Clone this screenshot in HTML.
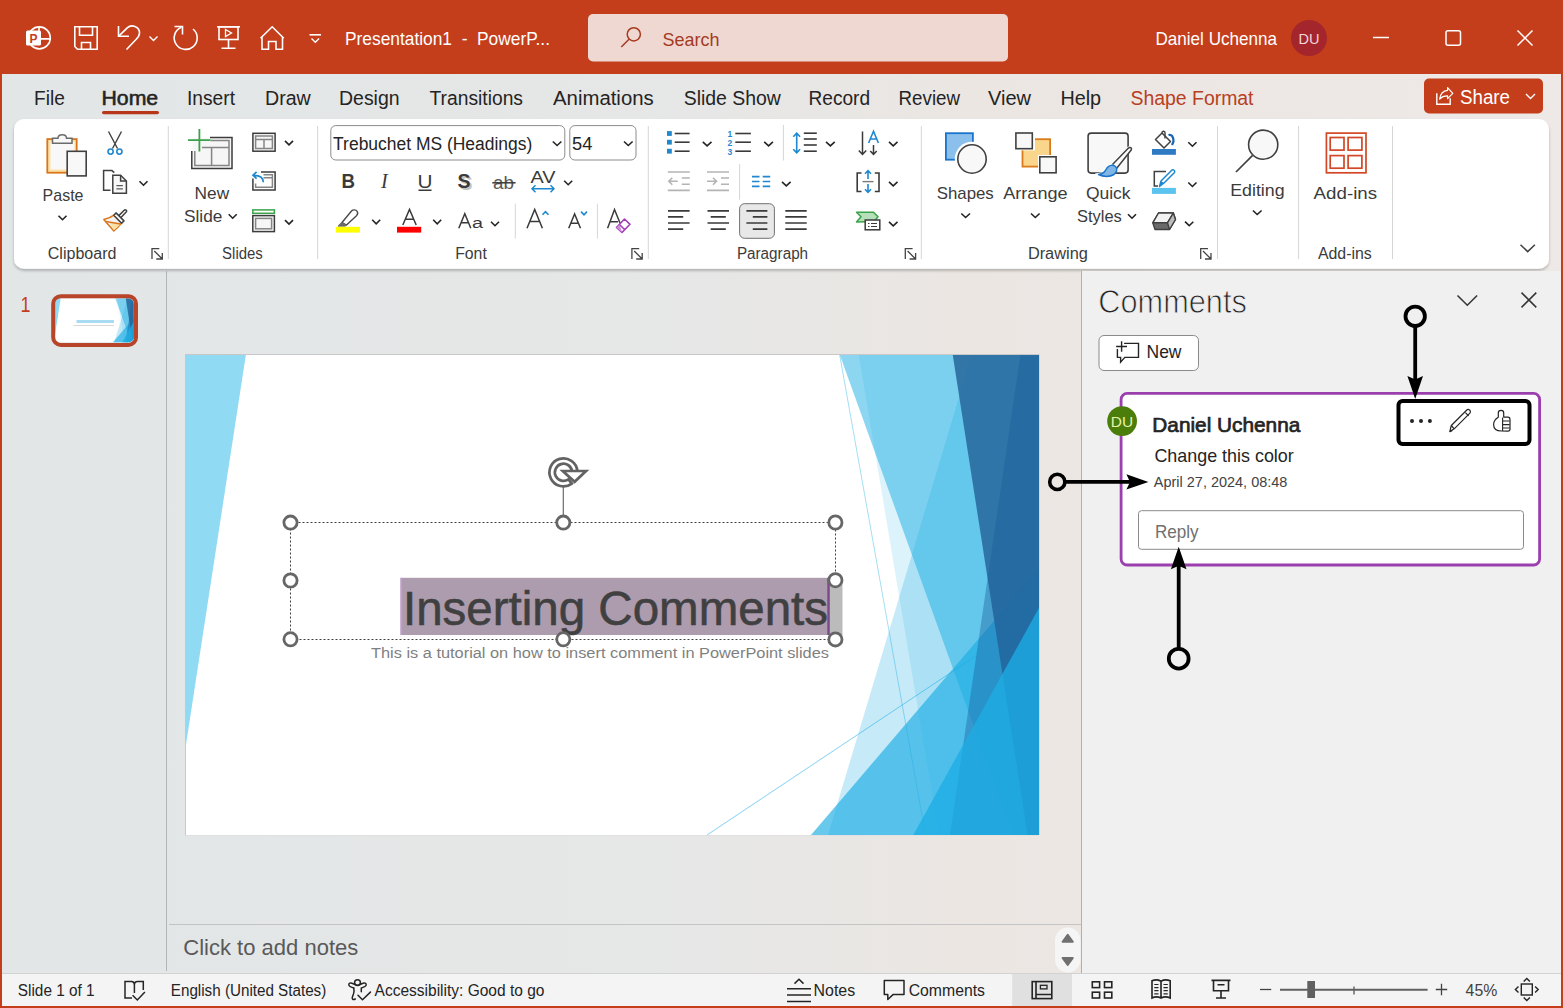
<!DOCTYPE html>
<html><head><meta charset="utf-8">
<style>
html,body{margin:0;padding:0;width:1563px;height:1008px;overflow:hidden;background:#e6e7e7;}
svg{display:block;position:absolute;left:0;top:0;}
text{font-family:"Liberation Sans",sans-serif;}
</style></head>
<body>
<svg width="1563" height="1008" viewBox="0 0 1563 1008">
<defs>
<linearGradient id="bg" x1="0" y1="0" x2="1" y2="0">
<stop offset="0" stop-color="#e2e6e7"/><stop offset="0.45" stop-color="#e6e7e6"/><stop offset="0.62" stop-color="#ebe6e2"/><stop offset="1" stop-color="#eee9e6"/>
</linearGradient>
<filter id="rsh" x="-5%" y="-20%" width="110%" height="150%"><feGaussianBlur in="SourceAlpha" stdDeviation="1.5"/><feOffset dy="1.5"/><feComponentTransfer><feFuncA type="linear" slope="0.25"/></feComponentTransfer><feMerge><feMergeNode/><feMergeNode in="SourceGraphic"/></feMerge></filter>
</defs>
<!-- window frame -->
<rect x="0" y="0" width="1563" height="1008" fill="#c43e1c"/>
<rect x="2" y="74" width="1559" height="932" fill="url(#bg)"/>
<!-- TITLE BAR -->
<g id="titlebar" fill="none" stroke="#ffffff" stroke-width="1.6">
<!-- ppt logo -->
<circle cx="39.3" cy="37.9" r="11"/>
<path d="M39 27 V38.9 H50.2"/>
<rect x="26" y="30.5" width="15" height="15" rx="1.5" fill="#ffffff" stroke="none"/>
<text x="29.6" y="42.8" font-size="13.5" font-weight="bold" fill="#c43e1c" stroke="none" textLength="8" lengthAdjust="spacingAndGlyphs">P</text>
<!-- save -->
<path d="M74.8 26.8 H97.2 V49.2 H77.5 L74.8 46.5 Z"/>
<path d="M79.5 26.8 V35.2 H92.5 V26.8"/>
<path d="M81.5 49.2 V42.5 H90.5 V49.2"/>
<!-- undo -->
<path d="M118.5 26 V36.2 H129"/>
<path d="M119 35.8 L127.5 27.6 C131.5 24 139.5 26.5 139.5 33 C139.5 36 138 37.5 136 39.5 L126.5 49.5"/>
<path d="M149.5 36.5 L153.5 40.5 L157.5 36.5" stroke-width="1.4"/>
<!-- redo (circle arrow) -->
<path d="M174.5 26.5 H182.5 V34.5"/>
<path d="M193 29 A11.5 11.5 0 1 1 181.5 27.2"/>
<!-- present -->
<path d="M217 26.8 H240"/>
<rect x="219" y="26.8" width="19" height="12.7"/>
<path d="M225.5 29.5 L231.5 33 L225.5 36.5 Z" stroke-width="1.3"/>
<path d="M228.5 39.5 V48 M221.5 48.3 H235.5"/>
<!-- home -->
<path d="M260.5 38.2 L272.2 26.8 L283.8 38.2 M262 36.8 V49.3 H268.5 V41.5 H276 V49.3 H282.5 V36.8"/>
<!-- customize -->
<path d="M309.5 34.8 H321" />
<path d="M311.5 38.5 L315.3 42.3 L319.1 38.5" stroke-width="1.4"/>
<!-- window controls -->
<path d="M1373 37.5 H1389" stroke-width="1.5"/>
<rect x="1446" y="30.8" width="14.5" height="14.5" rx="2" stroke-width="1.5"/>
<path d="M1517.5 30.5 L1532.5 45.5 M1532.5 30.5 L1517.5 45.5" stroke-width="1.5"/>
</g>
<text x="345" y="45" font-size="18.5" fill="#ffffff" style="white-space:pre" textLength="205" lengthAdjust="spacingAndGlyphs">Presentation1  -  PowerP...</text>
<rect x="588" y="14" width="420" height="47.5" rx="5" fill="#efd8d2"/>
<g fill="none" stroke="#a53a1f" stroke-width="1.5"><circle cx="633.8" cy="34.3" r="6.6"/><path d="M629 39.2 L621.3 47"/></g>
<text x="662.5" y="46" font-size="19" fill="#a53a1f" textLength="57" lengthAdjust="spacingAndGlyphs">Search</text>
<text x="1155.5" y="45" font-size="18.5" fill="#ffffff" textLength="121.5" lengthAdjust="spacingAndGlyphs">Daniel Uchenna</text>
<circle cx="1309" cy="38" r="18" fill="#a4262c"/>
<text x="1298.5" y="43.5" font-size="15" fill="#f0d8dc" textLength="21" lengthAdjust="spacingAndGlyphs">DU</text>

<!-- TABS -->
<g id="tabs" font-size="20">
<text x="34.0" y="105" fill="#242424" textLength="30.8" lengthAdjust="spacingAndGlyphs">File</text>
<text x="101.5" y="105" fill="#242424" stroke="#242424" stroke-width="0.55" textLength="56.7" lengthAdjust="spacingAndGlyphs">Home</text>
<text x="187.0" y="105" fill="#242424" textLength="48.0" lengthAdjust="spacingAndGlyphs">Insert</text>
<text x="265.0" y="105" fill="#242424" textLength="45.8" lengthAdjust="spacingAndGlyphs">Draw</text>
<text x="339.0" y="105" fill="#242424" textLength="60.6" lengthAdjust="spacingAndGlyphs">Design</text>
<text x="429.5" y="105" fill="#242424" textLength="93.5" lengthAdjust="spacingAndGlyphs">Transitions</text>
<text x="553.0" y="105" fill="#242424" textLength="100.7" lengthAdjust="spacingAndGlyphs">Animations</text>
<text x="683.7" y="105" fill="#242424" textLength="97.1" lengthAdjust="spacingAndGlyphs">Slide Show</text>
<text x="808.5" y="105" fill="#242424" textLength="61.5" lengthAdjust="spacingAndGlyphs">Record</text>
<text x="898.6" y="105" fill="#242424" textLength="61.4" lengthAdjust="spacingAndGlyphs">Review</text>
<text x="988.0" y="105" fill="#242424" textLength="43.0" lengthAdjust="spacingAndGlyphs">View</text>
<text x="1060.4" y="105" fill="#242424" textLength="40.7" lengthAdjust="spacingAndGlyphs">Help</text>
<text x="1130.5" y="105" fill="#b7401f" textLength="123.0" lengthAdjust="spacingAndGlyphs">Shape Format</text>
<rect x="102" y="111" width="57" height="3.2" rx="1.6" fill="#b8371a"/>
<rect x="1424" y="78.5" width="119" height="35" rx="5" fill="#c43e1c"/>
<g fill="none" stroke="#ffffff" stroke-width="1.4"><path d="M1436.8 93.2 V104.2 H1450.2 V98.3"/><path d="M1439.6 99 C1440.5 93.5 1444 90.6 1447.6 90.3 V87.6 L1452.8 93.3 L1447.6 98.6 V95.9 C1444.5 95.8 1441.8 96.8 1439.6 99 Z" stroke-linejoin="round" stroke-width="1.2"/>
<path d="M1526 94 L1530.5 98.5 L1535 94" stroke-width="1.4"/></g>
<text x="1460" y="104" font-size="20" fill="#ffffff" textLength="50" lengthAdjust="spacingAndGlyphs">Share</text>
</g>
<!-- RIBBON -->
<rect x="14" y="119" width="1535" height="149.8" rx="10" fill="#ffffff" filter="url(#rsh)"/>
<g id="ribbon">
<!--R1-->
<line x1="168.3" y1="126" x2="168.3" y2="259" stroke="#d6d6d6" stroke-width="1"/>
<line x1="317.6" y1="126" x2="317.6" y2="259" stroke="#d6d6d6" stroke-width="1"/>
<line x1="648.3" y1="126" x2="648.3" y2="259" stroke="#d6d6d6" stroke-width="1"/>
<line x1="921.3" y1="126" x2="921.3" y2="259" stroke="#d6d6d6" stroke-width="1"/>
<line x1="1217.5" y1="126" x2="1217.5" y2="259" stroke="#d6d6d6" stroke-width="1"/>
<line x1="1298.6" y1="126" x2="1298.6" y2="259" stroke="#d6d6d6" stroke-width="1"/>
<line x1="1392.5" y1="126" x2="1392.5" y2="259" stroke="#d6d6d6" stroke-width="1"/>
<text x="47.8" y="259.3" font-size="16" fill="#3b3b3b" textLength="68.6" lengthAdjust="spacingAndGlyphs">Clipboard</text>
<text x="222.1" y="259.3" font-size="16" fill="#3b3b3b" textLength="40.7" lengthAdjust="spacingAndGlyphs">Slides</text>
<text x="455.2" y="259.3" font-size="16" fill="#3b3b3b" textLength="31.6" lengthAdjust="spacingAndGlyphs">Font</text>
<text x="736.9" y="259.3" font-size="16" fill="#3b3b3b" textLength="71.2" lengthAdjust="spacingAndGlyphs">Paragraph</text>
<text x="1027.9" y="259.3" font-size="16" fill="#3b3b3b" textLength="59.9" lengthAdjust="spacingAndGlyphs">Drawing</text>
<text x="1317.9" y="259.3" font-size="16" fill="#3b3b3b" textLength="53.9" lengthAdjust="spacingAndGlyphs">Add-ins</text>
<g fill="none" stroke="#444" stroke-width="1.3"><path d="M152.0 259 V248.7 H159.3"/><path d="M154.3 251 L162.3 259 M162.3 253 V259 H156.3"/></g>
<g fill="none" stroke="#444" stroke-width="1.3"><path d="M631.9000000000001 259 V248.7 H639.2"/><path d="M634.2 251 L642.2 259 M642.2 253 V259 H636.2"/></g>
<g fill="none" stroke="#444" stroke-width="1.3"><path d="M905.3000000000001 259 V248.7 H912.6"/><path d="M907.6 251 L915.6 259 M915.6 253 V259 H909.6"/></g>
<g fill="none" stroke="#444" stroke-width="1.3"><path d="M1200.7 259 V248.7 H1208"/><path d="M1203 251 L1211 259 M1211 253 V259 H1205"/></g>
<g id="paste">
<rect x="47.3" y="139.1" width="29.4" height="33.6" fill="#fbe1a6" stroke="#d9761c" stroke-width="1.8"/>
<rect x="50.5" y="142" width="24" height="27.5" fill="#f8f8f8"/>
<path d="M52.5 143.3 V138.3 H58 C58 133.5 66.5 133.5 66.5 138.3 H72 V143.3 Z" fill="#f8f8f8" stroke="#6b6b6b" stroke-width="1.5"/>
<rect x="67.2" y="151.3" width="19" height="24.6" fill="#f8f8f8" stroke="#404040" stroke-width="1.6"/>
</g>
<text x="42.6" y="200.5" font-size="17" fill="#3b3b3b" textLength="40.9" lengthAdjust="spacingAndGlyphs">Paste</text>
<path d="M58.5 215.7 L62.5 219.7 L66.5 215.7" fill="none" stroke="#242424" stroke-width="1.6"/>
<g fill="none" stroke-width="1.4">
<path d="M108.5 131.5 L117.5 148.5 M121.5 131.5 L112.5 148.5" stroke="#404040"/>
<circle cx="110.6" cy="151.6" r="2.6" stroke="#1f88cf" stroke-width="1.6"/><circle cx="119.4" cy="151.6" r="2.6" stroke="#1f88cf" stroke-width="1.6"/>
</g>
<g fill="none" stroke="#404040" stroke-width="1.5">
<path d="M110.5 190.3 H103.6 V170.6 H111.9 L114.3 172.6"/>
<path d="M112.8 175.2 H120.6 L126.4 181 V193.3 H112.8 Z" fill="#f8f8f8"/>
<path d="M120.6 175.2 V181 H126.4"/>
<path d="M116.4 185.7 H122.9 M116.4 188.8 H122.9" stroke-width="1.3" stroke="#5a5a5a"/>
</g>
<path d="M139.5 181.2 L143.5 185.2 L147.5 181.2" fill="none" stroke="#242424" stroke-width="1.6"/>
<g stroke-width="1.5" stroke-linejoin="round">
<path d="M103.8 219.6 C107.5 218.8 111 217.5 113.8 215.2 L121.6 223.2 C119 226 116.5 228.5 113.8 231 Z" fill="#f3f3f3" stroke="#d9761c"/>
<path d="M109.8 223 L120.6 224.3 L113.8 230.2 Z" fill="#fbe1a6" stroke="none"/>
<path d="M105.8 221.6 L120.4 224" fill="none" stroke="#d9761c"/>
<path d="M118.8 215.6 L124.2 210.2 C125.2 209.2 127.4 210.6 126.4 211.8 L121 217.6" fill="#fff" stroke="#404040"/>
<path d="M113.8 215.2 L116 212.9 L124 220.9 L121.6 223.2 Z" fill="#fff" stroke="#404040"/>
</g>
<g fill="none" stroke="#858585" stroke-width="1.5">
<rect x="192.5" y="138" width="39" height="30" fill="#f6f6f6" stroke="none"/>
<path d="M210 137.4 H232 V168.4 H191.8 V151" stroke="#3c3c3c"/>
<path d="M194.8 151 V165.6 H229 V140.4 H210.5" />
<path d="M202 147.4 H229 M211.6 147.4 V165.6" />
</g>
<path d="M188 140.2 H210.5 M199.4 129 V151.6" stroke="#3aa24a" stroke-width="1.8"/>
<text x="194.6" y="198.6" font-size="17" fill="#3b3b3b" textLength="34.6" lengthAdjust="spacingAndGlyphs">New</text>
<text x="184.0" y="222.4" font-size="17" fill="#3b3b3b" textLength="38.4" lengthAdjust="spacingAndGlyphs">Slide</text>
<path d="M228.7 214.2 L232.7 218.2 L236.7 214.2" fill="none" stroke="#242424" stroke-width="1.6"/>
<g fill="none" stroke-width="1.5">
<rect x="252.9" y="133.3" width="22.2" height="17.9" fill="#f6f6f6" stroke="#3c3c3c"/>
<rect x="255.6" y="136" width="16.8" height="12.5" stroke="#858585"/>
<path d="M255.6 139.5 H272.4 M264 139.5 V148.5" stroke="#858585"/>
</g>
<path d="M285 140.9 L289 144.9 L293 140.9" fill="none" stroke="#242424" stroke-width="1.6"/>
<g fill="none" stroke-width="1.5">
<path d="M261 171.9 H275.1 V190 H252.9 V178.5" stroke="#3c3c3c"/>
<path d="M263.5 174.7 H272.4 V187.3 H255.6 V183.5 M263.5 177.8 H272.4" stroke="#858585"/>
</g>
<path d="M263.3 182.2 C263.3 177.8 261 175.3 253.5 175.3 M256.6 171.9 L253 175.3 L256.6 178.7" fill="none" stroke="#1f88cf" stroke-width="1.7"/>
<g fill="none" stroke-width="1.5">
<rect x="252.8" y="209.9" width="21.6" height="3.4" stroke="#3aa24a" fill="#ffffff"/>
<rect x="252.8" y="215.6" width="21.6" height="16" stroke="#3c3c3c" fill="#f6f6f6"/>
<rect x="255.6" y="218.4" width="16" height="10.4" stroke="#858585"/>
</g>
<path d="M285 220.1 L289 224.1 L293 220.1" fill="none" stroke="#242424" stroke-width="1.6"/>
<!--/R1-->
<!--R2-->
<rect x="330.8" y="125.6" width="234" height="34.4" rx="5" fill="#fff" stroke="#8c8c8c" stroke-width="1"/>
<rect x="569.8" y="125.6" width="66.2" height="34.4" rx="5" fill="#fff" stroke="#8c8c8c" stroke-width="1"/>
<text x="333.1" y="149.7" font-size="18" fill="#242424" textLength="199.2" lengthAdjust="spacingAndGlyphs">Trebuchet MS (Headings)</text>
<text x="572.0" y="149.7" font-size="18" fill="#242424" textLength="20.3" lengthAdjust="spacingAndGlyphs">54</text>
<path d="M552.8 141.5 L557.1 145.5 L561.4 141.5" fill="none" stroke="#242424" stroke-width="1.6"/>
<path d="M624.0 141.5 L628.3 145.5 L632.6 141.5" fill="none" stroke="#242424" stroke-width="1.6"/>
<text x="341.5" y="188" font-size="19.5" font-weight="bold" fill="#3a3a3a" textLength="13.5" lengthAdjust="spacingAndGlyphs">B</text>
<text x="381" y="188" font-size="20" font-style="italic" style="font-family:'Liberation Serif',serif" fill="#3a3a3a">I</text>
<text x="417.5" y="187.5" font-size="19" fill="#3a3a3a" textLength="15" lengthAdjust="spacingAndGlyphs">U</text>
<rect x="418.5" y="189.5" width="13" height="1.5" fill="#3a3a3a"/>
<text x="459.5" y="189.5" font-size="20" font-weight="bold" fill="#c4c4c4" textLength="13" lengthAdjust="spacingAndGlyphs">S</text>
<text x="457.5" y="187.8" font-size="20" font-weight="bold" fill="#3a3a3a" textLength="13" lengthAdjust="spacingAndGlyphs">S</text>
<text x="493" y="189" font-size="18" fill="#5a5a5a" textLength="21" lengthAdjust="spacingAndGlyphs">ab</text>
<path d="M492.3 182.8 H515.6" stroke="#3a3a3a" stroke-width="1.5"/>
<text x="530.5" y="183.2" font-size="17" fill="#3a3a3a" textLength="25" lengthAdjust="spacingAndGlyphs">AV</text>
<path d="M532 188.7 H554 M535.5 185.2 L532 188.7 L535.5 192.2 M550.5 185.2 L554 188.7 L550.5 192.2" fill="none" stroke="#1f88cf" stroke-width="1.5"/>
<path d="M564.2 180.7 L568.2 184.7 L572.2 180.7" fill="none" stroke="#242424" stroke-width="1.6"/>
<g stroke="#4a4a4a" stroke-width="1.4" stroke-linejoin="round">
<path d="M342 222.5 L351.5 211 C353 209.3 355.8 209.6 357 211.2 C358 212.6 357.7 214.5 356.5 215.7 L346.5 225 Z" fill="#fff"/>
<path d="M342 222.5 L338.5 226 L345 226 L346.5 225" fill="#6b6b6b" stroke="#6b6b6b"/>
</g>
<rect x="336" y="226.8" width="24" height="5.8" fill="#ffff00"/>
<path d="M372.2 219.8 L376.2 223.8 L380.2 219.8" fill="none" stroke="#242424" stroke-width="1.6"/>
<path d="M402.8 225 L409.5 209.5 L416.2 225 M405.3 219.3 H413.7" fill="none" stroke="#3a3a3a" stroke-width="1.5"/>
<rect x="397" y="226.8" width="24.2" height="5.8" fill="#ff0000"/>
<path d="M433.2 219.8 L437.2 223.8 L441.2 219.8" fill="none" stroke="#242424" stroke-width="1.6"/>
<path d="M458.8 228.2 L464.8 213.8 L470.8 228.2 M461 222.8 H468.6" fill="none" stroke="#3a3a3a" stroke-width="1.5"/>
<text x="472" y="228.3" font-size="15.5" fill="#3a3a3a" textLength="11" lengthAdjust="spacingAndGlyphs">a</text>
<path d="M491.0 221.7 L495.0 225.7 L499.0 221.7" fill="none" stroke="#242424" stroke-width="1.6"/>
<line x1="515.3" y1="203.7" x2="515.3" y2="238.6" stroke="#d6d6d6" stroke-width="1"/>
<line x1="597.4" y1="203.7" x2="597.4" y2="238.6" stroke="#d6d6d6" stroke-width="1"/>
<path d="M527 228.3 L534.7 209.5 L542.4 228.3 M529.7 221.6 H539.7" fill="none" stroke="#3a3a3a" stroke-width="1.5"/>
<path d="M542.5 214.8 L545.5 211.6 L548.5 214.8" fill="none" stroke="#1f88cf" stroke-width="1.6"/>
<path d="M568.7 228.3 L574.6 214 L580.5 228.3 M570.8 223.2 H578.4" fill="none" stroke="#3a3a3a" stroke-width="1.5"/>
<path d="M581 211.6 L584 214.8 L587 211.6" fill="none" stroke="#1f88cf" stroke-width="1.6"/>
<path d="M607.6 228.3 L614.5 209.5 L620 223 M610.2 221.8 H618" fill="none" stroke="#3a3a3a" stroke-width="1.5"/>
<path d="M616.5 227.5 L624.5 219 L630 224.3 L622 232.5 Z M619.5 224.5 L625 230" fill="#fff" stroke="#a23cb6" stroke-width="1.6" stroke-linejoin="round"/>
<path d="M616.5 227.5 L622 232.5 L619.5 224.5 Z" fill="#c98fd6" stroke="none"/>
<!--/R2-->
<!--R3-->
<rect x="667" y="131.1" width="4.8" height="4.8" fill="#1f88cf"/>
<path d="M674.7 133.5 H689.6" stroke="#3a3a3a" stroke-width="1.6"/>
<rect x="667" y="139.79999999999998" width="4.8" height="4.8" fill="#1f88cf"/>
<path d="M674.7 142.2 H689.6" stroke="#3a3a3a" stroke-width="1.6"/>
<rect x="667" y="148.79999999999998" width="4.8" height="4.8" fill="#1f88cf"/>
<path d="M674.7 151.2 H689.6" stroke="#3a3a3a" stroke-width="1.6"/>
<path d="M702.8 141.8 L707.1 145.8 L711.5 141.8" fill="none" stroke="#242424" stroke-width="1.6"/>
<text x="727.5" y="137.3" font-size="8.5" font-weight="bold" fill="#1f88cf">1</text>
<path d="M735.3 133.5 H750.9" stroke="#3a3a3a" stroke-width="1.6"/>
<text x="727.5" y="146.0" font-size="8.5" font-weight="bold" fill="#1f88cf">2</text>
<path d="M735.3 142.2 H750.9" stroke="#3a3a3a" stroke-width="1.6"/>
<text x="727.5" y="155.0" font-size="8.5" font-weight="bold" fill="#1f88cf">3</text>
<path d="M735.3 151.2 H750.9" stroke="#3a3a3a" stroke-width="1.6"/>
<path d="M764.2 141.8 L768.6 145.8 L772.9 141.8" fill="none" stroke="#242424" stroke-width="1.6"/>
<line x1="783.4" y1="125" x2="783.4" y2="160.5" stroke="#d6d6d6" stroke-width="1"/>
<path d="M796.7 133.5 V152.5 M793.3 136.8 L796.7 133.2 L800.1 136.8 M793.3 149.2 L796.7 152.8 L800.1 149.2" fill="none" stroke="#1f88cf" stroke-width="1.6"/>
<path d="M803.8 133.2 H816.8" stroke="#3a3a3a" stroke-width="1.6"/>
<path d="M803.8 139 H816.8" stroke="#3a3a3a" stroke-width="1.6"/>
<path d="M803.8 145 H816.8" stroke="#3a3a3a" stroke-width="1.6"/>
<path d="M803.8 151.2 H816.8" stroke="#3a3a3a" stroke-width="1.6"/>
<path d="M826.0 141.8 L830.4 145.8 L834.7 141.8" fill="none" stroke="#242424" stroke-width="1.6"/>
<path d="M862.5 131.5 V154.5 M858.8 150.5 L862.5 154.5 L866.2 150.5 M873.5 145 V154.5 M870.3 151 L873.5 154.5 L876.7 151" fill="none" stroke="#3a3a3a" stroke-width="1.5"/>
<path d="M868.6 143 L873.5 131.3 L878.4 143 M870.3 139 H876.7" fill="none" stroke="#1f88cf" stroke-width="1.6"/>
<path d="M889.0 141.8 L893.2 145.8 L897.5 141.8" fill="none" stroke="#242424" stroke-width="1.6"/>
<path d="M667.8 172 H689.8 M681.8 178 H689.8 M681.8 184.2 H689.8 M667.8 190.4 H689.8" stroke="#b4b4b4" stroke-width="1.6"/>
<path d="M677.8 181.2 H668.8 M672.3 177.7 L668.8 181.2 L672.3 184.7" fill="none" stroke="#b4b4b4" stroke-width="1.6"/>
<path d="M707 172 H729 M721 178 H729 M721 184.2 H729 M707 190.4 H729" stroke="#b4b4b4" stroke-width="1.6"/>
<path d="M707 181.2 H716.5 M713 177.7 L716.5 181.2 L713 184.7" fill="none" stroke="#b4b4b4" stroke-width="1.6"/>
<line x1="739.6" y1="164" x2="739.6" y2="199.7" stroke="#d6d6d6" stroke-width="1"/>
<path d="M752 176.6 H759.5 M752 181.5 H759.5 M752 186.4 H759.5 M762.7 176.6 H770.2 M762.7 181.5 H770.2 M762.7 186.4 H770.2" stroke="#1f88cf" stroke-width="1.7"/>
<path d="M782.0 181.8 L786.3 185.8 L790.6 181.8" fill="none" stroke="#242424" stroke-width="1.6"/>
<path d="M861.5 173 H857.2 V191.5 H861.5 M874.8 173 H879 V191.5 H874.8" fill="none" stroke="#3a3a3a" stroke-width="1.6"/>
<path d="M862.5 181.6 H873.5" stroke="#7a7a7a" stroke-width="1.4"/>
<path d="M868 171 V179 M865 173.8 L868 170.6 L871 173.8 M868 184 V192 M865 189.2 L868 192.4 L871 189.2" fill="none" stroke="#1f88cf" stroke-width="1.6"/>
<path d="M889.0 181.8 L893.2 185.8 L897.5 181.8" fill="none" stroke="#242424" stroke-width="1.6"/>
<rect x="739.6" y="203.7" width="34.8" height="34.6" rx="5" fill="#e8e8e8" stroke="#707070" stroke-width="1"/>
<path d="M668 210.9 H689.6 M668 216.9 H683.2 M668 223 H689.6 M668 229.1 H683.2" stroke="#3a3a3a" stroke-width="1.6"/>
<path d="M707.5 210.9 H729 M710.7 216.9 H725.8 M707.5 223 H729 M710.7 229.1 H725.8" stroke="#3a3a3a" stroke-width="1.6"/>
<path d="M746.4 210.9 H767.4 M752.8 216.9 H767.4 M746.4 223 H767.4 M752.8 229.1 H767.4" stroke="#3a3a3a" stroke-width="1.6"/>
<path d="M785.3 210.9 H806.7 M785.3 216.9 H806.7 M785.3 223 H806.7 M785.3 229.1 H806.7" stroke="#3a3a3a" stroke-width="1.6"/>
<path d="M856.5 222 L861 216.8 L856.5 212.2 H873.5 L878 216.8 L874 221.5 Z" fill="#b5e0b9" stroke="#3aa24a" stroke-width="1.5" stroke-linejoin="round"/>
<rect x="865.2" y="220" width="14.6" height="9.8" fill="#fff" stroke="#3a3a3a" stroke-width="1.5"/>
<path d="M868 223.5 H869.5 M871 223.5 H877 M868 226.5 H869.5 M871 226.5 H877" stroke="#3a3a3a" stroke-width="1.1"/>
<path d="M889.0 221.8 L893.2 225.8 L897.5 221.8" fill="none" stroke="#242424" stroke-width="1.6"/>
<!--/R3-->
<!--R4-->
<rect x="945.9" y="133.2" width="27" height="26.5" fill="#8cc0ec" stroke="#1b74c9" stroke-width="1.8"/>
<circle cx="972" cy="159" r="17.2" fill="#ffffff"/>
<circle cx="972" cy="159" r="14.2" fill="#f8f8f8" stroke="#404040" stroke-width="1.6"/>
<text x="936.7" y="199" font-size="17" fill="#3b3b3b" textLength="57.1" lengthAdjust="spacingAndGlyphs">Shapes</text>
<path d="M961.3 213.5 L965.6 217.5 L970.0 213.5" fill="none" stroke="#242424" stroke-width="1.6"/>
<rect x="1022.5" y="139.2" width="27.6" height="27.4" fill="#f9d68b" stroke="#db7a1b" stroke-width="1.8"/>
<rect x="1014.2" y="131.3" width="20.8" height="19.1" fill="#fff"/>
<rect x="1015.9" y="133" width="16.4" height="15.7" fill="#f8f8f8" stroke="#404040" stroke-width="1.6"/>
<rect x="1038" y="155" width="20.8" height="19.6" fill="#fff"/>
<rect x="1039.8" y="156.8" width="16.3" height="16" fill="#f8f8f8" stroke="#404040" stroke-width="1.6"/>
<text x="1003.2" y="199" font-size="17" fill="#3b3b3b" textLength="64.4" lengthAdjust="spacingAndGlyphs">Arrange</text>
<path d="M1031.0 213.5 L1035.3 217.5 L1039.6 213.5" fill="none" stroke="#242424" stroke-width="1.6"/>
<rect x="1088.1" y="133.1" width="40" height="40" rx="3" fill="#f8f8f8" stroke="#404040" stroke-width="1.6"/>
<path d="M1095 173.5 L1104 172 L1110 164.5 L1127 147.5 C1129.5 145 1133 146.8 1131 149.8 L1114.5 169 L1108 175.5 C1104 177.5 1099 177 1096 175.5 Z" fill="#fff" stroke="none"/>
<path d="M1112.5 164.5 L1128 148.5 C1130 146.5 1132.5 147.8 1131 150.3 L1116.5 168.5" fill="#fff" stroke="#404040" stroke-width="1.5" stroke-linejoin="round"/>
<path d="M1098.5 174.5 C1103.5 174 1105 171.5 1107 168 C1109 165 1113 164.5 1115.5 166.5 C1118 169 1116.5 172.5 1114 174.5 C1110 177 1103.5 177 1098.5 174.5 Z" fill="#7fb6e6" stroke="#1b74c9" stroke-width="1.5" stroke-linejoin="round"/>
<text x="1085.9" y="199" font-size="17" fill="#3b3b3b" textLength="44.7" lengthAdjust="spacingAndGlyphs">Quick</text>
<text x="1077.0" y="222.4" font-size="17" fill="#3b3b3b" textLength="44.8" lengthAdjust="spacingAndGlyphs">Styles</text>
<path d="M1128.0 214.2 L1132.0 218.2 L1136.0 214.2" fill="none" stroke="#242424" stroke-width="1.6"/>
<path d="M1155.5 139.5 L1162 133 L1170.5 141.5 L1164 148 Z" fill="#fff" stroke="#404040" stroke-width="1.5" stroke-linejoin="round"/>
<path d="M1162 133 C1162 131 1164.5 130.5 1165 132.5 V138.5" fill="none" stroke="#404040" stroke-width="1.4"/>
<path d="M1168.5 135 C1171.5 134 1173.5 136.5 1173.5 141.5 L1172 145" fill="none" stroke="#1565b5" stroke-width="2.2"/>
<rect x="1152" y="149" width="23.9" height="5.8" fill="#2e7bc4"/>
<path d="M1188.3 142.2 L1192.4 146.2 L1196.5 142.2" fill="none" stroke="#242424" stroke-width="1.6"/>
<path d="M1166 171.5 H1154.3 V186 H1158" fill="none" stroke="#404040" stroke-width="1.5"/>
<path d="M1159.5 186.5 L1161 181 L1171.5 170.5 C1173 169 1175.5 170.5 1174.5 172.5 L1164 183 Z" fill="#fff" stroke="#1f88cf" stroke-width="1.5" stroke-linejoin="round"/>
<path d="M1159.5 186.5 L1161 181 L1164 183 Z" fill="#1f88cf"/>
<rect x="1152" y="187.9" width="23.9" height="6" fill="#5bc4ee"/>
<path d="M1188.3 182.5 L1192.4 186.5 L1196.5 182.5" fill="none" stroke="#242424" stroke-width="1.6"/>
<path d="M1152.8 222.8 L1158.5 213 H1173.3 L1175.5 219.5 L1169.5 229.5 H1155 Z" fill="#6a6a6a" stroke="#404040" stroke-width="1.4" stroke-linejoin="round"/>
<path d="M1152.8 222.8 L1158.5 213 H1173.3 L1167.5 222.8 Z" fill="#f2f2f2" stroke="#404040" stroke-width="1.4" stroke-linejoin="round"/>
<path d="M1167.5 222.8 L1173.3 213 L1175.5 219.5 L1169.5 229.5 Z" fill="#bdbdbd" stroke="#404040" stroke-width="1.4" stroke-linejoin="round"/>
<path d="M1185.0 221.7 L1189.2 225.7 L1193.3 221.7" fill="none" stroke="#242424" stroke-width="1.6"/>
<circle cx="1263.2" cy="144.7" r="14.6" fill="#f8f8f8" stroke="#404040" stroke-width="1.6"/>
<path d="M1252.6 155.3 L1236 172" stroke="#404040" stroke-width="1.7"/>
<text x="1230.2" y="196" font-size="17" fill="#3b3b3b" textLength="54.4" lengthAdjust="spacingAndGlyphs">Editing</text>
<path d="M1252.9 210.5 L1257.2 214.5 L1261.6 210.5" fill="none" stroke="#242424" stroke-width="1.6"/>
<g fill="none" stroke="#d24726" stroke-width="1.7"><rect x="1326.4" y="133.1" width="39.6" height="39.7"/>
<rect x="1330.2" y="137.5" width="13.8" height="12.6"/>
<rect x="1348.1" y="137.5" width="13.8" height="12.6"/>
<rect x="1330.2" y="155.6" width="13.8" height="12.6"/>
<rect x="1348.1" y="155.6" width="13.8" height="12.6"/>
</g>
<text x="1313.6" y="199" font-size="17" fill="#3b3b3b" textLength="63.5" lengthAdjust="spacingAndGlyphs">Add-ins</text>
<path d="M1520.5 244.8 L1527.7 251.6 L1534.9 244.8" fill="none" stroke="#404040" stroke-width="1.5"/>
<!--/R4-->
</g>
<!-- thumbnails pane -->
<!-- thumbnail -->
<text x="20.5" y="312" font-size="21.5" fill="#c43e1c" textLength="10" lengthAdjust="spacingAndGlyphs">1</text>
<clipPath id="thclip"><rect x="55" y="298.3" width="78.8" height="44.2" rx="6"/></clipPath>
<g clip-path="url(#thclip)">
<g transform="translate(55.1,298.4) scale(0.0921,0.0917) translate(-185.5,-354.5)"><use href="#sc"/></g>
<rect x="76.5" y="320" width="37.5" height="3" fill="#a9dcf2"/>
<rect x="73.5" y="325" width="40.5" height="0.8" fill="#cfcfcf"/>
</g>
<rect x="53.2" y="296.2" width="82.8" height="48.7" rx="7.5" fill="none" stroke="#b8442a" stroke-width="4"/>

<line x1="166.5" y1="271" x2="166.5" y2="971" stroke="#b4b4b4" stroke-width="1"/>
<!-- slide -->
<g id="slide">
<rect x="185.5" y="354.5" width="853.5" height="480.2" fill="#ffffff" stroke="#c8c8c8" stroke-width="1"/>
<clipPath id="slideclip"><rect x="186" y="355" width="853" height="480"/></clipPath>
<g clip-path="url(#slideclip)"><g id="sc"><rect x="185" y="354" width="855" height="481" fill="#fff"/>
<polygon points="185,354 246,354 185,751" fill="#91daf3"/>
<polygon points="839.5,354 1040,354 1040,835 1013,835" fill="#1cade4" fill-opacity="0.5"/>
<polygon points="858.6,354 1040,354 1040,835 939,835" fill="#1cade4" fill-opacity="0.15"/>
<polygon points="972,354 1040,354 1040,835 828,835" fill="#1cade4" fill-opacity="0.25"/>
<polygon points="811,835 1040,567 1040,835" fill="#1cade4" fill-opacity="0.66"/>
<path d="M707 835 L976.5 655.5" stroke="#1cade4" stroke-opacity="0.55" stroke-width="1" fill="none"/>
<polygon points="952.6,354 1040,354 1040,835 1027.6,835" fill="#2a6ca0" fill-opacity="0.9"/>
<polygon points="1020.5,354 1040,354 1040,835 950,835" fill="#1a5e9e" fill-opacity="0.4"/>
<polygon points="913.3,835 1040,606 1040,835" fill="#1cade4" fill-opacity="0.78"/>
<path d="M839.5 354 L925.5 835" stroke="#1cade4" stroke-opacity="0.4" stroke-width="1" fill="none"/>
</g></g>
<rect x="290.5" y="522.5" width="545" height="117" fill="none" stroke="#404040" stroke-width="1" stroke-dasharray="2 2"/>
<rect x="400.5" y="577.8" width="429" height="57.2" fill="#ad9bae"/>
<rect x="400.5" y="577.8" width="1.6" height="57.2" fill="#c39bd3"/>
<rect x="829.8" y="577.8" width="12.7" height="57.2" fill="#bbbbbb"/>
<rect x="827.3" y="577.8" width="2.5" height="57.2" fill="#7b4a8b"/>
<text x="403" y="624.8" font-size="47.5" fill="#404040" stroke="#404040" stroke-width="0.6" textLength="425" lengthAdjust="spacingAndGlyphs">Inserting Comments</text>
<text x="371" y="657.5" font-size="15.5" fill="#7f7f7f" textLength="458" lengthAdjust="spacingAndGlyphs">This is a tutorial on how to insert comment in PowerPoint slides</text>
<line x1="563.3" y1="487" x2="563.3" y2="515" stroke="#6a6a6a" stroke-width="1.2"/>
<g fill="none" stroke="#626262" stroke-width="2.7" stroke-linejoin="miter"><path d="M577.4 471 A14 14 0 1 0 571.8 483.6 L568.4 479.4 A8.6 8.6 0 1 1 572 471"/><path d="M562.8 471 H586 L574.6 481.8 Z"/></g>
<circle cx="290.5" cy="522.6" r="6.6" fill="#fff" stroke="#666" stroke-width="2.8"/>
<circle cx="563.3" cy="522.6" r="6.6" fill="#fff" stroke="#666" stroke-width="2.8"/>
<circle cx="835.4" cy="522.5" r="6.6" fill="#fff" stroke="#666" stroke-width="2.8"/>
<circle cx="290.5" cy="580.5" r="6.6" fill="#fff" stroke="#666" stroke-width="2.8"/>
<circle cx="835.4" cy="580.2" r="6.6" fill="#fff" stroke="#666" stroke-width="2.8"/>
<circle cx="290.5" cy="639.3" r="6.6" fill="#fff" stroke="#666" stroke-width="2.8"/>
<circle cx="563.3" cy="639.3" r="6.6" fill="#fff" stroke="#666" stroke-width="2.8"/>
<circle cx="835.4" cy="639.4" r="6.6" fill="#fff" stroke="#666" stroke-width="2.8"/>
</g>
<!-- notes -->
<line x1="169" y1="924.5" x2="1081" y2="924.5" stroke="#c4c4c4" stroke-width="1"/>
<!-- comments pane -->
<rect x="1082" y="271" width="479" height="702" fill="#f0f0f0"/>
<line x1="1081.5" y1="271" x2="1081.5" y2="973" stroke="#b0b0b0" stroke-width="1"/>
<g id="comments">
<text x="1098.3" y="313.3" font-size="32.5" fill="#242424" stroke="#f0f0f0" stroke-width="0.9" textLength="148.5" lengthAdjust="spacingAndGlyphs">Comments</text>
<path d="M1457.5 295.5 L1467.3 305.3 L1477.1 295.5" fill="none" stroke="#333" stroke-width="1.5"/>
<path d="M1521.5 292.6 L1536.3 307.4 M1536.3 292.6 L1521.5 307.4" fill="none" stroke="#333" stroke-width="1.5"/>
<rect x="1099" y="335.5" width="99.5" height="35" rx="5" fill="#ffffff" stroke="#8a8a8a" stroke-width="1"/>
<g fill="none" stroke="#242424" stroke-width="1.4">
<path d="M1124.1 343.4 H1138.5 V357.4 H1124.8 L1120.6 362.2 V357.4 H1117.4 V349"/>
<path d="M1116.1 346.5 H1127 M1121.6 341.3 V351.8"/>
</g>
<text x="1146.5" y="358.2" font-size="18.5" fill="#242424" textLength="35" lengthAdjust="spacingAndGlyphs">New</text>
<!-- card -->
<rect x="1121.1" y="393.4" width="418.5" height="171.6" rx="6" fill="#ffffff" stroke="#9b3fae" stroke-width="2.8"/>
<circle cx="1122.1" cy="421.1" r="14.9" fill="#4a7d0a"/>
<text x="1110.8" y="426.8" font-size="15" fill="#e8f2a8" textLength="22.3" lengthAdjust="spacingAndGlyphs">DU</text>
<text x="1152.3" y="431.6" font-size="21" fill="#242424" stroke="#242424" stroke-width="0.7" textLength="148" lengthAdjust="spacingAndGlyphs">Daniel Uchenna</text>
<text x="1154.4" y="462.2" font-size="18.5" fill="#242424" textLength="139.4" lengthAdjust="spacingAndGlyphs">Change this color</text>
<text x="1153.8" y="487.1" font-size="15.5" fill="#424242" textLength="133.6" lengthAdjust="spacingAndGlyphs">April 27, 2024, 08:48</text>
<rect x="1138.5" y="510.7" width="385" height="38.6" rx="3" fill="#ffffff" stroke="#8a8a8a" stroke-width="1"/>
<text x="1154.9" y="537.6" font-size="18.5" fill="#707070" textLength="43.7" lengthAdjust="spacingAndGlyphs">Reply</text>
<!-- action box -->
<rect x="1398.5" y="401" width="131" height="42.9" rx="4" fill="none" stroke="#000" stroke-width="4"/>
<circle cx="1412" cy="421" r="2" fill="#242424"/><circle cx="1421" cy="421" r="2" fill="#242424"/><circle cx="1429.9" cy="421" r="2" fill="#242424"/>
<g fill="none" stroke="#242424" stroke-width="1.2" stroke-linejoin="round">
<path d="M1449.8 431.6 L1451.3 425.5 L1466.8 410 C1468 408.8 1470.2 409.8 1470.4 411.4 C1470.5 412.1 1470.2 412.8 1469.7 413.3 L1454.2 428.8 Z"/>
<path d="M1451.3 425.5 L1454.2 428.8 M1449.8 431.6 L1452.5 430.5 M1465.4 412.6 L1468.6 415.8"/>
</g>
<g fill="none" stroke="#242424" stroke-width="1.2" stroke-linejoin="round">
<path d="M1501.4 431 C1496 431 1493.6 428 1493.6 424.5 C1493.6 421 1495.5 419 1498.3 417.3 V413 C1498.3 409.6 1503.7 409.6 1503.7 413 V417.1 H1508 C1509.4 417.1 1510 418.4 1510 419.5 V429 C1510 430.3 1509.1 431.2 1508 431.2 Z"/>
<path d="M1502.6 417.6 V431 M1502.6 421 H1509.6 M1502.6 424.6 H1509.6 M1502.6 428 H1509.6" stroke-width="1.1"/>
</g>
<!-- annotation arrows -->
<g stroke="#000" stroke-width="3.8" fill="none">
<circle cx="1415.2" cy="316.3" r="9.7"/>
<path d="M1415.2 326 V380"/>
<circle cx="1057.3" cy="481.9" r="7.6" stroke-width="3.6"/>
<path d="M1065 481.9 H1130"/>
<circle cx="1178.7" cy="658.7" r="9.9"/>
<path d="M1178.7 648.8 V565"/>
</g>
<path d="M1407.4 376 L1415.2 398.9 L1423 376 L1415.2 379.5 Z" fill="#000"/>
<path d="M1126.4 474.2 L1148.4 481.9 L1126.4 489.6 L1130 481.9 Z" fill="#000"/>
<path d="M1170.9 569.3 L1178.7 546.8 L1186.5 569.3 L1178.7 565.8 Z" fill="#000"/>
</g>
<!-- status bar -->
<rect x="2" y="973" width="1559" height="33" fill="#f4f4f4"/>
<line x1="2" y1="973.5" x2="1561" y2="973.5" stroke="#d2d2d2" stroke-width="1"/>
<g id="status">
<text x="183.3" y="954.8" font-size="22" fill="#595959" textLength="175" lengthAdjust="spacingAndGlyphs">Click to add notes</text>
<rect x="1055" y="927.5" width="25.5" height="45" rx="12.7" fill="#f5f5f5"/>
<path d="M1062.6 941.8 L1067.7 934.8 L1072.8 941.8 Z" fill="#707070" stroke="#707070" stroke-width="2" stroke-linejoin="round"/>
<path d="M1062.6 958 L1067.7 965 L1072.8 958 Z" fill="#707070" stroke="#707070" stroke-width="2" stroke-linejoin="round"/>
<text x="17.8" y="996" font-size="16" fill="#242424" textLength="76.8" lengthAdjust="spacingAndGlyphs">Slide 1 of 1</text>
<g fill="none" stroke="#242424" stroke-width="1.5">
<path d="M132 997.9 H125 V981.6 H131.5 C133.5 981.6 134.4 983 134.4 985 V992.9 M134.4 985 C134.4 983 135.5 981.6 137.5 981.6 H143.3 V989.9"/>
<path d="M132.6 995.2 L137.3 1000 L144.9 992.1"/>
</g>
<text x="170.8" y="996" font-size="16" fill="#242424" textLength="155.5" lengthAdjust="spacingAndGlyphs">English (United States)</text>
<g fill="none" stroke="#242424" stroke-width="1.5" stroke-linecap="round" stroke-linejoin="round">
<circle cx="357.5" cy="982.6" r="2.9"/>
<path d="M353.7 988 C351 987 349 986.5 348.8 985 C348.6 983 350.5 982.5 352 983.2 L355 984.5 C356.5 985.5 358.5 985.5 360 984.5 L363 983.2 C364.5 982.5 366.4 983 366.2 985 C366 986.5 364 987 361.3 988 V991.8"/>
<path d="M353.7 988 C354.3 990 354.2 992 353.5 994 C352.5 996.5 351.5 998 352.5 999 C353.3 1000 354.5 999.5 355.3 999"/>
<path d="M358 995.2 L362.5 999.7 L370.4 992.1"/>
</g>
<text x="374.6" y="996" font-size="16" fill="#242424" textLength="169.8" lengthAdjust="spacingAndGlyphs">Accessibility: Good to go</text>
<!-- notes btn -->
<g fill="none" stroke="#242424" stroke-width="1.5">
<path d="M787 988.8 H811 M787 995.1 H811 M787 1001.4 H811"/>
<path d="M794.5 983.6 L799 979.2 L803.5 983.6"/>
</g>
<text x="813.6" y="996" font-size="16" fill="#242424" textLength="41.6" lengthAdjust="spacingAndGlyphs">Notes</text>
<g fill="none" stroke="#242424" stroke-width="1.5" stroke-linejoin="round">
<path d="M884.3 980.5 H904 V994.6 H893 L887.8 999.5 V994.6 H884.3 Z"/>
</g>
<text x="908.7" y="996" font-size="16" fill="#242424" textLength="76.3" lengthAdjust="spacingAndGlyphs">Comments</text>
<rect x="1012.2" y="974" width="59.8" height="32" fill="#e0e0e0"/>
<g fill="none" stroke="#242424" stroke-width="1.6">
<rect x="1032.2" y="981.6" width="19.6" height="17"/>
<path d="M1036 981.6 V998.6 M1036 994.5 H1051.8"/>
<rect x="1040.4" y="985.3" width="6.6" height="3.6" stroke-width="1.3"/>
<rect x="1092.3" y="981.8" width="7.3" height="5.8"/><rect x="1104.5" y="981.8" width="7.3" height="5.8"/>
<rect x="1092.3" y="992.2" width="7.3" height="5.8"/><rect x="1104.5" y="992.2" width="7.3" height="5.8"/>
<path d="M1161 998 C1158 996.5 1155 996.5 1152 998 V980.8 C1155 979.5 1158 979.5 1161 981.2 C1164 979.5 1167 979.5 1170.2 980.8 V998 C1167 996.5 1164 996.5 1161 998 Z M1161 981.2 V998"/>
<path d="M1154.3 984.5 H1158.5 M1154.3 987.6 H1158.5 M1154.3 990.7 H1158.5 M1154.3 993.8 H1158.5 M1163.5 984.5 H1167.8 M1163.5 987.6 H1167.8 M1163.5 990.7 H1167.8 M1163.5 993.8 H1167.8" stroke-width="1.2"/>
<path d="M1211.5 980.4 H1230.5 M1213.5 980.4 V990.8 H1228.5 V980.4 M1221 990.8 V997.8 M1216 998 H1226 M1217.5 984.8 H1224.5"/>
</g>
<path d="M1260 989.5 H1271.2" stroke="#424242" stroke-width="1.3"/>
<path d="M1280 989.7 H1427.6" stroke="#606060" stroke-width="2"/>
<rect x="1307.3" y="981" width="7.7" height="17" fill="#606060"/>
<path d="M1354 986.6 V994.4" stroke="#606060" stroke-width="1.4"/>
<path d="M1435.8 989.5 H1447.2 M1441.5 983.8 V995.2" stroke="#424242" stroke-width="1.3"/>
<text x="1465.6" y="996" font-size="16" fill="#424242" textLength="31.7" lengthAdjust="spacingAndGlyphs">45%</text>
<g fill="none" stroke="#242424" stroke-width="1.4">
<rect x="1521.3" y="984" width="11" height="11"/>
<path d="M1523.7 981.5 L1526.8 978.4 L1529.9 981.5 M1523.7 997.5 L1526.8 1000.6 L1529.9 997.5 M1518.5 986.5 L1515.4 989.5 L1518.5 992.5 M1535.1 986.5 L1538.2 989.5 L1535.1 992.5"/>
</g>
</g>
</svg>
</body></html>
